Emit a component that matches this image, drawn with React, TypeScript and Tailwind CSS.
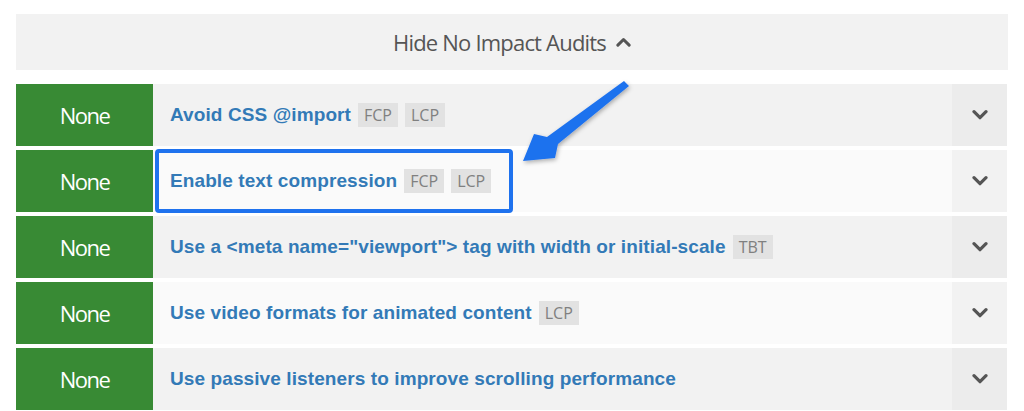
import React from "react";

interface Audit {
  title: string;
  tags: string[];
}

const audits: Audit[] = [
  { title: "Avoid CSS @import", tags: ["FCP", "LCP"] },
  { title: "Enable text compression", tags: ["FCP", "LCP"] },
  { title: 'Use a <meta name="viewport"> tag with width or initial-scale', tags: ["TBT"] },
  { title: "Use video formats for animated content", tags: ["LCP"] },
  { title: "Use passive listeners to improve scrolling performance", tags: [] },
];

function Chevron({ up = false, size = 16 }: { up?: boolean; size?: number }) {
  return (
    <svg width={size} height={size * 0.65} viewBox="0 0 16 10" fill="none">
      <path
        d={up ? "M2 8.5 L8 2.5 L14 8.5" : "M2 1.5 L8 7.5 L14 1.5"}
        stroke="#555555"
        strokeWidth="3.2"
        strokeLinecap="round"
        strokeLinejoin="round"
      />
    </svg>
  );
}

export default function App() {
  return (
    <div className="relative w-[1024px] h-[411px] overflow-hidden bg-white pt-[14px] px-4">
      {/* Toggle header */}
      <div className="flex items-center justify-center gap-[10px] h-[56px] bg-[#f2f2f2] font-['Open_Sans',sans-serif] text-[22px] tracking-[-0.8px] text-[#555555]">
        <span>Hide No Impact Audits</span>
        <Chevron up size={15} />
      </div>

      {/* Audit rows */}
      <div className="mt-[14px] flex flex-col gap-[4px] w-[991px]">
        {audits.map((audit, i) => (
          <div
            key={audit.title}
            className={`flex h-[62px] ${i % 2 === 0 ? "bg-[#f2f2f2]" : "bg-[#fafafa]"}`}
          >
            <div className="w-[137px] shrink-0 flex items-center justify-center bg-[#388a34] font-['Open_Sans',sans-serif] text-[22px] tracking-[-1.5px] text-white">
              None
            </div>
            <div className="flex-1 flex items-center gap-[7px] pl-[17px]">
              <span className="font-['Liberation_Sans',Arial,sans-serif] font-bold text-[19px] tracking-[0.1px] text-[#337ab7]">
                {audit.title}
              </span>
              {audit.tags.map((t) => (
                <span
                  key={t}
                  className="h-[24px] px-[6px] flex items-center bg-[#e2e2e2] font-['Open_Sans',sans-serif] text-[16px] text-[#808080]"
                >
                  {t}
                </span>
              ))}
            </div>
            <div
              className={`w-[55px] shrink-0 flex items-center justify-center ${
                i % 2 === 0 ? "bg-[#ececec]" : "bg-[#f2f2f2]"
              }`}
            >
              <Chevron size={16} />
            </div>
          </div>
        ))}
      </div>

      {/* Highlight box around the second audit */}
      <div className="absolute left-[155px] top-[149px] w-[358px] h-[64px] border-[4px] border-[#1f72ee] rounded-[4px]" />

      {/* Arrow */}
      <svg className="absolute left-0 top-0" width="1024" height="411" viewBox="0 0 1024 411">
        <defs>
          <filter id="sh" x="-20%" y="-20%" width="140%" height="140%">
            <feDropShadow dx="1" dy="2" stdDeviation="2" floodColor="#000" floodOpacity="0.3" />
          </filter>
        </defs>
        <polygon
          points="624,81 629,86 558,144 555,158 523,161 534,134 547,137"
          fill="#1f72ee"
          filter="url(#sh)"
        />
      </svg>
    </div>
  );
}
